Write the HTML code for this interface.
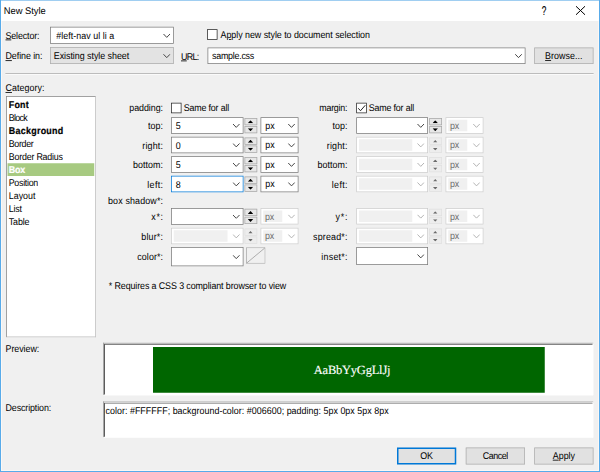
<!DOCTYPE html><html><head><meta charset="utf-8"><title>New Style</title><style>
html,body{margin:0;padding:0;overflow:hidden;}
body{width:600px;height:472px;overflow:hidden;background:#f0f0f0;}
#w{position:absolute;left:0;top:0;width:2400px;height:1888px;transform:scale(0.25);transform-origin:0 0;
 background:#f0f0f0;font-family:"Liberation Sans",sans-serif;font-size:35.6px;color:#000;overflow:hidden;text-rendering:geometricPrecision;}
#w div,#w span,#w svg{position:absolute;box-sizing:border-box;}
.t{white-space:nowrap;line-height:48px;height:48px;transform:scaleY(1.1);transform-origin:50% 62%;}
.r{text-align:right;}
.c{text-align:center;}
u{text-decoration:underline;text-decoration-thickness:3.2px;text-underline-offset:2.5px;}
.cb{background:#fff;border:3.2px solid #7a7a7a;}
.cbd{background:#fff;border:3.2px solid #cbcbcb;}
.cbd i{position:absolute;background:#f0f0f0;left:7.5px;top:7px;bottom:7px;}
.dd{background:#e3e3e3;border:3.2px solid #adadad;}
.btn{background:#e1e1e1;border:3.2px solid #adadad;}
.chk{background:#fff;border:3.6px solid #262626;}
.sp{background:#e7e7e7;border:3px solid #a8a8a8;}
.spd{background:#ededed;border:3px solid #e0e0e0;}
.dis{color:#6d6d6d;}
</style></head><body><div id="w">
<div class="" style="left:0px;top:0px;width:2400px;height:1888px;background:#58abea;"></div>
<div class="" style="left:3.6px;top:3.4px;width:2392.6px;height:1881px;background:#fbf8f6;"></div>
<div class="" style="left:8px;top:84px;width:2384px;height:1796px;background:#f0f0f0;"></div>
<div class="" style="left:3.6px;top:3.4px;width:2392.6px;height:80.6px;background:#fff;"></div>
<div class="t " style="left:15px;top:19px;letter-spacing:-0.10px;font-size:37.5px;transform:scaleY(1.03);">New Style</div>
<div class="t c" style="left:2151px;top:19px;width:50px;font-size:40px;transform:scale(0.82,1.28);-webkit-text-stroke:0.6px;">?</div>
<svg style="left:2302px;top:23px" width="40" height="38" viewBox="0 0 40 38"><path d="M2 2 L38 36 M38 2 L2 36" stroke="#000" stroke-width="4" fill="none"/></svg>
<div class="t " style="left:22px;top:117.5px;letter-spacing:-0.56px;"><u>S</u>elector:</div>
<div class="cb" style="left:200px;top:107px;width:495px;height:68px;"></div>
<div class="t " style="left:225px;top:118px;letter-spacing:0.15px;">#left-nav ul li a</div>
<svg style="left:652px;top:134.25px" width="30" height="17.5" viewBox="0 0 30 17.5"><path d="M2 2 L15 15.5 L28 2" fill="none" stroke="#3c3c3c" stroke-width="3.8"/></svg>
<div class="chk" style="left:828px;top:117px;width:42px;height:42px;"></div>
<div class="t " style="left:882px;top:116px;letter-spacing:-0.15px;">A<u>p</u>ply new style to document selection</div>
<div class="t " style="left:22px;top:200.5px;letter-spacing:-0.27px;"><u>D</u>efine in:</div>
<div class="dd" style="left:200px;top:188px;width:495px;height:68px;"></div>
<div class="t " style="left:215px;top:200px;letter-spacing:-0.14px;">Existing style sheet</div>
<svg style="left:652px;top:215.25px" width="30" height="17.5" viewBox="0 0 30 17.5"><path d="M2 2 L15 15.5 L28 2" fill="none" stroke="#3c3c3c" stroke-width="3.8"/></svg>
<div class="t " style="left:724px;top:202px;letter-spacing:-2.70px;"><u>U</u>RL:</div>
<div class="cb" style="left:830px;top:190px;width:1272px;height:66px;"></div>
<div class="t " style="left:848px;top:200px;letter-spacing:-1.00px;">sample.css</div>
<svg style="left:2059px;top:215.25px" width="30" height="17.5" viewBox="0 0 30 17.5"><path d="M2 2 L15 15.5 L28 2" fill="none" stroke="#3c3c3c" stroke-width="3.8"/></svg>
<div class="btn" style="left:2137px;top:190px;width:237px;height:66px;"></div>
<div class="t c" style="left:2137px;top:200px;letter-spacing:0.20px;width:237px;"><u>B</u>rowse...</div>
<div class="" style="left:22px;top:292px;width:2352px;height:3.4px;background:#8e8e8e;"></div>
<div class="" style="left:22px;top:295.4px;width:2352px;height:3.2px;background:#fdfdfd;"></div>
<div class="t " style="left:22px;top:328px;letter-spacing:0.21px;"><u>C</u>ategory:</div>
<div class="" style="left:24px;top:384px;width:359px;height:965px;background:#fff;border:3.2px solid #828282;border-right-color:#bdbdbd;border-bottom-color:#bdbdbd;"></div>
<div class="t " style="left:35px;top:393.5px;letter-spacing:0.96px;font-weight:bold;-webkit-text-stroke:0.8px;">Font</div>
<div class="t " style="left:35px;top:445.5px;letter-spacing:-2.78px;">Block</div>
<div class="t " style="left:35px;top:497.5px;letter-spacing:1.15px;font-weight:bold;-webkit-text-stroke:0.8px;">Background</div>
<div class="t " style="left:35px;top:549.5px;letter-spacing:-1.37px;">Border</div>
<div class="t " style="left:35px;top:601.5px;letter-spacing:-0.88px;">Border Radius</div>
<div class="" style="left:30px;top:652.5px;width:347px;height:51px;background:#a7ca81;"></div>
<div class="t " style="left:35px;top:653.5px;letter-spacing:-0.62px;font-weight:bold;-webkit-text-stroke:0.8px;color:#fff;">Box</div>
<div class="t " style="left:35px;top:705.5px;letter-spacing:-1.24px;">Position</div>
<div class="t " style="left:35px;top:757.5px;letter-spacing:0.03px;">Layout</div>
<div class="t " style="left:35px;top:809.5px;letter-spacing:-0.80px;">List</div>
<div class="t " style="left:35px;top:861.5px;letter-spacing:-0.53px;">Table</div>
<div class="t r " style="left:51.77px;width:600px;top:409px;letter-spacing:-0.23px;">padding:</div>
<div class="chk" style="left:684px;top:411px;width:42px;height:42px;"></div>
<div class="t " style="left:735px;top:408px;letter-spacing:-0.72px;">Same for all</div>
<div class="t r " style="left:52.21px;width:600px;top:481px;letter-spacing:0.21px;">top:</div>
<div class="cb" style="left:684px;top:469px;width:290px;height:66px;"></div>
<svg style="left:930px;top:494.25px" width="30" height="17.5" viewBox="0 0 30 17.5"><path d="M2 2 L15 15.5 L28 2" fill="none" stroke="#3c3c3c" stroke-width="3.8"/></svg>
<div class="t " style="left:703px;top:480px;">5</div>
<div class="sp" style="left:978px;top:472px;width:51px;height:29px;"></div>
<div class="sp" style="left:978px;top:504px;width:51px;height:29px;"></div>
<svg style="left:990.5px;top:480.5px" width="22" height="12" viewBox="0 0 22 12"><polygon points="0,12 11,0 22,12" fill="#000"/></svg>
<svg style="left:990.5px;top:513px" width="22" height="12" viewBox="0 0 22 12"><polygon points="0,0 22,0 11,12" fill="#000"/></svg>
<div class="cb" style="left:1042px;top:469px;width:152px;height:66px;"></div>
<div class="t " style="left:1061px;top:479px;letter-spacing:-0.09px;">px</div>
<svg style="left:1151px;top:494.25px" width="30" height="17.5" viewBox="0 0 30 17.5"><path d="M2 2 L15 15.5 L28 2" fill="none" stroke="#3c3c3c" stroke-width="3.8"/></svg>
<div class="t r " style="left:52.77px;width:600px;top:559px;letter-spacing:0.77px;">right:</div>
<div class="cb" style="left:684px;top:547px;width:290px;height:66px;"></div>
<svg style="left:930px;top:572.25px" width="30" height="17.5" viewBox="0 0 30 17.5"><path d="M2 2 L15 15.5 L28 2" fill="none" stroke="#3c3c3c" stroke-width="3.8"/></svg>
<div class="t " style="left:703px;top:558px;">0</div>
<div class="sp" style="left:978px;top:550px;width:51px;height:29px;"></div>
<div class="sp" style="left:978px;top:582px;width:51px;height:29px;"></div>
<svg style="left:990.5px;top:558.5px" width="22" height="12" viewBox="0 0 22 12"><polygon points="0,12 11,0 22,12" fill="#000"/></svg>
<svg style="left:990.5px;top:591px" width="22" height="12" viewBox="0 0 22 12"><polygon points="0,0 22,0 11,12" fill="#000"/></svg>
<div class="cb" style="left:1042px;top:547px;width:152px;height:66px;"></div>
<div class="t " style="left:1061px;top:557px;letter-spacing:-0.09px;">px</div>
<svg style="left:1151px;top:572.25px" width="30" height="17.5" viewBox="0 0 30 17.5"><path d="M2 2 L15 15.5 L28 2" fill="none" stroke="#3c3c3c" stroke-width="3.8"/></svg>
<div class="t r " style="left:52.21px;width:600px;top:637px;letter-spacing:0.21px;">bottom:</div>
<div class="cb" style="left:684px;top:625px;width:290px;height:66px;"></div>
<svg style="left:930px;top:650.25px" width="30" height="17.5" viewBox="0 0 30 17.5"><path d="M2 2 L15 15.5 L28 2" fill="none" stroke="#3c3c3c" stroke-width="3.8"/></svg>
<div class="t " style="left:703px;top:636px;">5</div>
<div class="sp" style="left:978px;top:628px;width:51px;height:29px;"></div>
<div class="sp" style="left:978px;top:660px;width:51px;height:29px;"></div>
<svg style="left:990.5px;top:636.5px" width="22" height="12" viewBox="0 0 22 12"><polygon points="0,12 11,0 22,12" fill="#000"/></svg>
<svg style="left:990.5px;top:669px" width="22" height="12" viewBox="0 0 22 12"><polygon points="0,0 22,0 11,12" fill="#000"/></svg>
<div class="cb" style="left:1042px;top:625px;width:152px;height:66px;"></div>
<div class="t " style="left:1061px;top:635px;letter-spacing:-0.09px;">px</div>
<svg style="left:1151px;top:650.25px" width="30" height="17.5" viewBox="0 0 30 17.5"><path d="M2 2 L15 15.5 L28 2" fill="none" stroke="#3c3c3c" stroke-width="3.8"/></svg>
<div class="t r " style="left:53.4px;width:600px;top:715px;letter-spacing:1.40px;">left:</div>
<div class="cb" style="left:684px;top:703px;width:290px;height:66px;border-color:#0078d7;"></div>
<svg style="left:930px;top:728.25px" width="30" height="17.5" viewBox="0 0 30 17.5"><path d="M2 2 L15 15.5 L28 2" fill="none" stroke="#3c3c3c" stroke-width="3.8"/></svg>
<div class="t " style="left:703px;top:714px;">8</div>
<div class="sp" style="left:978px;top:706px;width:51px;height:29px;"></div>
<div class="sp" style="left:978px;top:738px;width:51px;height:29px;"></div>
<svg style="left:990.5px;top:714.5px" width="22" height="12" viewBox="0 0 22 12"><polygon points="0,12 11,0 22,12" fill="#000"/></svg>
<svg style="left:990.5px;top:747px" width="22" height="12" viewBox="0 0 22 12"><polygon points="0,0 22,0 11,12" fill="#000"/></svg>
<div class="cb" style="left:1042px;top:703px;width:152px;height:66px;"></div>
<div class="t " style="left:1061px;top:713px;letter-spacing:-0.09px;">px</div>
<svg style="left:1151px;top:728.25px" width="30" height="17.5" viewBox="0 0 30 17.5"><path d="M2 2 L15 15.5 L28 2" fill="none" stroke="#3c3c3c" stroke-width="3.8"/></svg>
<div class="t r " style="left:52.57px;width:600px;top:780px;letter-spacing:0.57px;">box shadow*:</div>
<div class="t r " style="left:54.73px;width:600px;top:845px;letter-spacing:2.73px;">x*:</div>
<div class="cb" style="left:684px;top:832px;width:290px;height:67px;"></div>
<svg style="left:930px;top:857.75px" width="30" height="17.5" viewBox="0 0 30 17.5"><path d="M2 2 L15 15.5 L28 2" fill="none" stroke="#3c3c3c" stroke-width="3.8"/></svg>
<div class="sp" style="left:978px;top:835px;width:51px;height:29px;"></div>
<div class="sp" style="left:978px;top:867px;width:51px;height:29px;"></div>
<svg style="left:990.5px;top:843.5px" width="22" height="12" viewBox="0 0 22 12"><polygon points="0,12 11,0 22,12" fill="#000"/></svg>
<svg style="left:990.5px;top:876px" width="22" height="12" viewBox="0 0 22 12"><polygon points="0,0 22,0 11,12" fill="#000"/></svg>
<div class="cbd" style="left:1042px;top:832px;width:152px;height:66px;"><i style="width:76px"></i></div>
<div class="t dis" style="left:1059.5px;top:842px;letter-spacing:-0.09px;">px</div>
<svg style="left:1151px;top:857.25px" width="30" height="17.5" viewBox="0 0 30 17.5"><path d="M2 2 L15 15.5 L28 2" fill="none" stroke="#b0b0b0" stroke-width="3.8"/></svg>
<div class="t r " style="left:52.78px;width:600px;top:923px;letter-spacing:0.78px;">blur*:</div>
<div class="cbd" style="left:684px;top:911px;width:290px;height:66px;"><i style="right:60.7px"></i></div>
<svg style="left:930px;top:936.25px" width="30" height="17.5" viewBox="0 0 30 17.5"><path d="M2 2 L15 15.5 L28 2" fill="none" stroke="#b0b0b0" stroke-width="3.8"/></svg>
<div class="spd" style="left:978px;top:914px;width:51px;height:29px;"></div>
<div class="spd" style="left:978px;top:946px;width:51px;height:29px;"></div>
<svg style="left:992.5px;top:923.5px" width="18" height="10" viewBox="0 0 18 10"><polygon points="0,10 9,0 18,10" fill="#6a6a6a"/></svg>
<svg style="left:992.5px;top:956px" width="18" height="10" viewBox="0 0 18 10"><polygon points="0,0 18,0 9,10" fill="#6a6a6a"/></svg>
<div class="cbd" style="left:1042px;top:911px;width:152px;height:66px;"><i style="width:76px"></i></div>
<div class="t dis" style="left:1059.5px;top:921px;letter-spacing:-0.09px;">px</div>
<svg style="left:1151px;top:936.25px" width="30" height="17.5" viewBox="0 0 30 17.5"><path d="M2 2 L15 15.5 L28 2" fill="none" stroke="#b0b0b0" stroke-width="3.8"/></svg>
<div class="t r " style="left:52.35px;width:600px;top:1004px;letter-spacing:0.35px;">color*:</div>
<div class="cb" style="left:684px;top:988px;width:290px;height:77px;"></div>
<svg style="left:930px;top:1018.75px" width="30" height="17.5" viewBox="0 0 30 17.5"><path d="M2 2 L15 15.5 L28 2" fill="none" stroke="#3c3c3c" stroke-width="3.8"/></svg>
<svg style="left:984px;top:989px" width="78" height="66" viewBox="0 0 78 66"><rect x="1.6" y="1.6" width="74.8" height="62.8" fill="#f0f0f0" stroke="#adadad" stroke-width="3.2"/><path d="M3 63 L75 3" stroke="#8a8a8a" stroke-width="2.6"/></svg>
<div class="t r " style="left:789.05px;width:600px;top:409px;letter-spacing:-0.95px;">margin:</div>
<div class="chk" style="left:1425px;top:411px;width:42px;height:42px;"></div>
<svg style="left:1430px;top:417px" width="34" height="32" viewBox="0 0 34 32"><path d="M3 16 L12 26 L31 4" fill="none" stroke="#222" stroke-width="4"/></svg>
<div class="t " style="left:1475px;top:407px;letter-spacing:-0.72px;">Same for all</div>
<div class="t r " style="left:790.21px;width:600px;top:481px;letter-spacing:0.21px;">top:</div>
<div class="cb" style="left:1425px;top:469px;width:287px;height:66px;"></div>
<svg style="left:1668px;top:494.25px" width="30" height="17.5" viewBox="0 0 30 17.5"><path d="M2 2 L15 15.5 L28 2" fill="none" stroke="#3c3c3c" stroke-width="3.8"/></svg>
<div class="sp" style="left:1717px;top:472px;width:51px;height:29px;"></div>
<div class="sp" style="left:1717px;top:504px;width:51px;height:29px;"></div>
<svg style="left:1729.5px;top:480.5px" width="22" height="12" viewBox="0 0 22 12"><polygon points="0,12 11,0 22,12" fill="#000"/></svg>
<svg style="left:1729.5px;top:513px" width="22" height="12" viewBox="0 0 22 12"><polygon points="0,0 22,0 11,12" fill="#000"/></svg>
<div class="cbd" style="left:1782px;top:469px;width:152px;height:66px;"><i style="width:76px"></i></div>
<div class="t dis" style="left:1799.5px;top:479px;letter-spacing:-0.09px;">px</div>
<svg style="left:1891px;top:494.25px" width="30" height="17.5" viewBox="0 0 30 17.5"><path d="M2 2 L15 15.5 L28 2" fill="none" stroke="#b0b0b0" stroke-width="3.8"/></svg>
<div class="t r " style="left:790.77px;width:600px;top:559px;letter-spacing:0.77px;">right:</div>
<div class="cbd" style="left:1425px;top:547px;width:287px;height:66px;"><i style="right:60.01px"></i></div>
<svg style="left:1668px;top:572.25px" width="30" height="17.5" viewBox="0 0 30 17.5"><path d="M2 2 L15 15.5 L28 2" fill="none" stroke="#b0b0b0" stroke-width="3.8"/></svg>
<div class="spd" style="left:1717px;top:550px;width:51px;height:29px;"></div>
<div class="spd" style="left:1717px;top:582px;width:51px;height:29px;"></div>
<svg style="left:1731.5px;top:559.5px" width="18" height="10" viewBox="0 0 18 10"><polygon points="0,10 9,0 18,10" fill="#6a6a6a"/></svg>
<svg style="left:1731.5px;top:592px" width="18" height="10" viewBox="0 0 18 10"><polygon points="0,0 18,0 9,10" fill="#6a6a6a"/></svg>
<div class="cbd" style="left:1782px;top:547px;width:152px;height:66px;"><i style="width:76px"></i></div>
<div class="t dis" style="left:1799.5px;top:557px;letter-spacing:-0.09px;">px</div>
<svg style="left:1891px;top:572.25px" width="30" height="17.5" viewBox="0 0 30 17.5"><path d="M2 2 L15 15.5 L28 2" fill="none" stroke="#b0b0b0" stroke-width="3.8"/></svg>
<div class="t r " style="left:790.21px;width:600px;top:637px;letter-spacing:0.21px;">bottom:</div>
<div class="cbd" style="left:1425px;top:625px;width:287px;height:66px;"><i style="right:60.01px"></i></div>
<svg style="left:1668px;top:650.25px" width="30" height="17.5" viewBox="0 0 30 17.5"><path d="M2 2 L15 15.5 L28 2" fill="none" stroke="#b0b0b0" stroke-width="3.8"/></svg>
<div class="spd" style="left:1717px;top:628px;width:51px;height:29px;"></div>
<div class="spd" style="left:1717px;top:660px;width:51px;height:29px;"></div>
<svg style="left:1731.5px;top:637.5px" width="18" height="10" viewBox="0 0 18 10"><polygon points="0,10 9,0 18,10" fill="#6a6a6a"/></svg>
<svg style="left:1731.5px;top:670px" width="18" height="10" viewBox="0 0 18 10"><polygon points="0,0 18,0 9,10" fill="#6a6a6a"/></svg>
<div class="cbd" style="left:1782px;top:625px;width:152px;height:66px;"><i style="width:76px"></i></div>
<div class="t dis" style="left:1799.5px;top:635px;letter-spacing:-0.09px;">px</div>
<svg style="left:1891px;top:650.25px" width="30" height="17.5" viewBox="0 0 30 17.5"><path d="M2 2 L15 15.5 L28 2" fill="none" stroke="#b0b0b0" stroke-width="3.8"/></svg>
<div class="t r " style="left:791.4px;width:600px;top:715px;letter-spacing:1.40px;">left:</div>
<div class="cbd" style="left:1425px;top:703px;width:287px;height:66px;"><i style="right:60.01px"></i></div>
<svg style="left:1668px;top:728.25px" width="30" height="17.5" viewBox="0 0 30 17.5"><path d="M2 2 L15 15.5 L28 2" fill="none" stroke="#b0b0b0" stroke-width="3.8"/></svg>
<div class="spd" style="left:1717px;top:706px;width:51px;height:29px;"></div>
<div class="spd" style="left:1717px;top:738px;width:51px;height:29px;"></div>
<svg style="left:1731.5px;top:715.5px" width="18" height="10" viewBox="0 0 18 10"><polygon points="0,10 9,0 18,10" fill="#6a6a6a"/></svg>
<svg style="left:1731.5px;top:748px" width="18" height="10" viewBox="0 0 18 10"><polygon points="0,0 18,0 9,10" fill="#6a6a6a"/></svg>
<div class="cbd" style="left:1782px;top:703px;width:152px;height:66px;"><i style="width:76px"></i></div>
<div class="t dis" style="left:1799.5px;top:713px;letter-spacing:-0.09px;">px</div>
<svg style="left:1891px;top:728.25px" width="30" height="17.5" viewBox="0 0 30 17.5"><path d="M2 2 L15 15.5 L28 2" fill="none" stroke="#b0b0b0" stroke-width="3.8"/></svg>
<div class="t r " style="left:793.23px;width:600px;top:845px;letter-spacing:3.23px;">y*:</div>
<div class="cbd" style="left:1425px;top:832px;width:287px;height:66px;"><i style="right:60.01px"></i></div>
<svg style="left:1668px;top:857.25px" width="30" height="17.5" viewBox="0 0 30 17.5"><path d="M2 2 L15 15.5 L28 2" fill="none" stroke="#b0b0b0" stroke-width="3.8"/></svg>
<div class="spd" style="left:1717px;top:835px;width:51px;height:29px;"></div>
<div class="spd" style="left:1717px;top:867px;width:51px;height:29px;"></div>
<svg style="left:1731.5px;top:844.5px" width="18" height="10" viewBox="0 0 18 10"><polygon points="0,10 9,0 18,10" fill="#6a6a6a"/></svg>
<svg style="left:1731.5px;top:877px" width="18" height="10" viewBox="0 0 18 10"><polygon points="0,0 18,0 9,10" fill="#6a6a6a"/></svg>
<div class="cbd" style="left:1782px;top:832px;width:152px;height:66px;"><i style="width:76px"></i></div>
<div class="t dis" style="left:1799.5px;top:842px;letter-spacing:-0.09px;">px</div>
<svg style="left:1891px;top:857.25px" width="30" height="17.5" viewBox="0 0 30 17.5"><path d="M2 2 L15 15.5 L28 2" fill="none" stroke="#b0b0b0" stroke-width="3.8"/></svg>
<div class="t r " style="left:790.77px;width:600px;top:923px;letter-spacing:0.77px;">spread*:</div>
<div class="cbd" style="left:1425px;top:911px;width:287px;height:66px;"><i style="right:60.01px"></i></div>
<svg style="left:1668px;top:936.25px" width="30" height="17.5" viewBox="0 0 30 17.5"><path d="M2 2 L15 15.5 L28 2" fill="none" stroke="#b0b0b0" stroke-width="3.8"/></svg>
<div class="spd" style="left:1717px;top:914px;width:51px;height:29px;"></div>
<div class="spd" style="left:1717px;top:946px;width:51px;height:29px;"></div>
<svg style="left:1731.5px;top:923.5px" width="18" height="10" viewBox="0 0 18 10"><polygon points="0,10 9,0 18,10" fill="#6a6a6a"/></svg>
<svg style="left:1731.5px;top:956px" width="18" height="10" viewBox="0 0 18 10"><polygon points="0,0 18,0 9,10" fill="#6a6a6a"/></svg>
<div class="cbd" style="left:1782px;top:911px;width:152px;height:66px;"><i style="width:76px"></i></div>
<div class="t dis" style="left:1799.5px;top:921px;letter-spacing:-0.09px;">px</div>
<svg style="left:1891px;top:936.25px" width="30" height="17.5" viewBox="0 0 30 17.5"><path d="M2 2 L15 15.5 L28 2" fill="none" stroke="#b0b0b0" stroke-width="3.8"/></svg>
<div class="t r " style="left:791.01px;width:600px;top:1002px;letter-spacing:1.01px;">inset*:</div>
<div class="cb" style="left:1425px;top:988px;width:287px;height:72px;"></div>
<svg style="left:1668px;top:1016.25px" width="30" height="17.5" viewBox="0 0 30 17.5"><path d="M2 2 L15 15.5 L28 2" fill="none" stroke="#3c3c3c" stroke-width="3.8"/></svg>
<div class="t " style="left:435px;top:1119px;letter-spacing:-0.42px;">* Requires a CSS 3 compliant browser to view</div>
<div class="t " style="left:22px;top:1372px;letter-spacing:-0.22px;">Preview:</div>
<div class="" style="left:412px;top:1371px;width:1961px;height:210px;background:#fff;border:3.2px solid #fff;border-top:4px solid #a6a6a6;border-left:4px solid #a6a6a6;box-shadow:inset 4px 4px 0 #5c5c5c;"></div>
<div class="" style="left:612px;top:1388px;width:1567px;height:183px;background:#006600;"></div>
<div class="t " style="left:1255px;top:1453px;letter-spacing:-0.88px;color:#fff;font-family:'Liberation Serif',serif;font-size:50px;transform:none;-webkit-text-stroke:0.5px;">AaBbYyGgLlJj</div>
<div class="t " style="left:22px;top:1607.5px;letter-spacing:-0.45px;">Description:</div>
<div class="" style="left:412px;top:1606px;width:1961px;height:144px;background:#fff;border:3.2px solid #fff;border-top:4px solid #a6a6a6;border-left:4px solid #a6a6a6;box-shadow:inset 4px 4px 0 #5c5c5c;"></div>
<div class="t " style="left:422px;top:1618px;letter-spacing:0.11px;">color: #FFFFFF; background-color: #006600; padding: 5px 0px 5px 8px</div>
<div class="btn" style="left:1588px;top:1790px;width:237px;height:68px;border:6.6px solid #0078d7;"></div>
<div class="t c" style="left:1588px;top:1799px;width:237px;">OK</div>
<div class="btn" style="left:1863px;top:1790px;width:237px;height:68px;"></div>
<div class="t c" style="left:1863px;top:1799px;letter-spacing:-1.76px;width:237px;">Cancel</div>
<div class="btn" style="left:2137px;top:1790px;width:237px;height:68px;"></div>
<div class="t c" style="left:2137px;top:1799px;width:237px;"><u>A</u>pply</div>
</div></body></html>
